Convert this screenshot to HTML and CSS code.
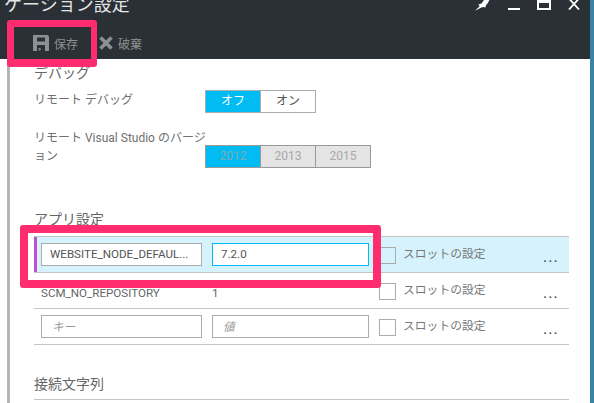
FILE: index.html
```html
<!DOCTYPE html>
<html lang="ja">
<head>
    <meta charset="UTF-8">
    <meta name="viewport" content="width=device-width, initial-scale=1.0">
    <title>アプリケーション設定</title>
    <link rel="stylesheet" href="styles.css">
</head>
<body>
    <div class="blade">
        <header class="blade-head">
            <div class="title-row">
                <h1 class="title">ケーション設定</h1>
                <div class="window-btns">
                    <svg class="win-pin" width="15" height="11" viewBox="0 0 15 11"><path d="M0 10.8 L4.6 6.2 L3.4 4.6 L6.4 3.4 L9 0 L14.4 0 L12.6 3.4 L11 5 L10.4 7.6 L8.4 7 L6.4 7.4 Z" fill="#fff"/></svg>
                    <svg class="win-min" width="12" height="10" viewBox="0 0 12 10"><rect y="8" width="12" height="2" fill="#fff"/></svg>
                    <svg class="win-max" width="14" height="10" viewBox="0 0 14 10"><path d="M1 -2 H13 V9 H1 Z" fill="none" stroke="#fff" stroke-width="2"/><rect y="0" width="14" height="3" fill="#fff"/></svg>
                    <svg class="win-close" width="12" height="10" viewBox="0 0 12 10"><path d="M1 -1.5 L11 9.5 M11 -1.5 L1 9.5" stroke="#fff" stroke-width="1.8" fill="none"/></svg>
                </div>
            </div>
            <div class="commands">
                <div class="command">
                    <svg width="16" height="16" viewBox="0 0 16 16"><path fill-rule="evenodd" d="M0 0 H14.5 L16 1.5 V16 H0 Z M4 2.5 V6.5 H12 V2.5 Z M4 10 V16 H12 V10 Z" fill="#8d9092"/><rect x="5.5" y="13.2" width="2.2" height="2.2" fill="#8d9092"/></svg>
                    <span>保存</span>
                </div>
                <div class="command">
                    <svg width="14" height="14" viewBox="0 0 14 14"><path d="M1.5 1.5 L12.5 12.5 M12.5 1.5 L1.5 12.5" stroke="#8d9092" stroke-width="3.6" fill="none"/></svg>
                    <span>破棄</span>
                </div>
            </div>
        </header>

        <main class="blade-body">
            <h2 class="section-title first">デバッグ</h2>
            <div class="field field-remote">
                <div class="field-label">リモート デバッグ</div>
                <div class="toggle">
                    <div class="seg on">オフ</div>
                    <div class="seg">オン</div>
                </div>
            </div>
            <div class="field field-version">
                <div class="field-label">リモート Visual Studio のバージ<br>ョン</div>
                <div class="toggle disabled">
                    <div class="seg on">2012</div>
                    <div class="seg">2013</div>
                    <div class="seg">2015</div>
                </div>
            </div>

            <h2 class="section-title apps">アプリ設定</h2>
            <div class="settings">
                <div class="row selected">
                    <div class="cell-input"><div class="input">WEBSITE_NODE_DEFAUL...</div></div>
                    <div class="cell-input"><div class="input focus">7.2.0</div></div>
                    <div class="check"></div>
                    <div class="slot">スロットの設定</div>
                    <div class="more">...</div>
                </div>
                <div class="row">
                    <div class="cell-input plain">SCM_NO_REPOSITORY</div>
                    <div class="cell-input plain">1</div>
                    <div class="check"></div>
                    <div class="slot">スロットの設定</div>
                    <div class="more">...</div>
                </div>
                <div class="row">
                    <div class="cell-input"><div class="input hint">キー</div></div>
                    <div class="cell-input"><div class="input hint">値</div></div>
                    <div class="check"></div>
                    <div class="slot">スロットの設定</div>
                    <div class="more">...</div>
                </div>
            </div>

            <h2 class="section-title conn">接続文字列</h2>
            <div class="conn-line"></div>
        </main>

        <div class="mark mark-save"></div>
        <div class="mark mark-row"></div>
    </div>
</body>
</html>
```

FILE: styles.css
```css
* {
    box-sizing: border-box;
}
html, body {
    margin: 0;
    height: 100%;
    overflow: hidden;
}
body {
    font-family: Roboto, "Noto Sans CJK JP", sans-serif;
    background-color: #fff;
    color: #707070;
    font-size: 12px;
}
.blade {
    position: relative;
    width: 594px;
    height: 403px;
    overflow: hidden;
    display: flex;
    flex-direction: column;
    border-right: 4px solid #3a82a6;
}
.blade-head {
    height: 59px;
    background-color: #2a3035;
    flex: none;
}
.title-row {
    height: 27px;
    display: flex;
    justify-content: space-between;
    align-items: flex-start;
}
.title {
    margin: -10px 0 0 4px;
    font-size: 18px;
    line-height: 26px;
    font-weight: 400;
    color: #e4e6e7;
    font-family: "Noto Sans CJK JP", sans-serif;
}
.window-btns {
    display: flex;
    margin-right: 10px;
}
.win-pin { margin-right: 18px; }
.win-min { margin-right: 17px; }
.win-max { margin-right: 17px; }
.commands {
    display: flex;
    padding: 8px 0 0 33px;
}
.command {
    display: flex;
    align-items: center;
    height: 16px;
    margin-right: 21px;
    color: #8d9092;
    font-family: "Noto Sans CJK JP", sans-serif;
}
.command span {
    margin-left: 5px;
}
.blade-body {
    flex: 1;
    margin-left: 7px;
    margin-right: 21px;
    border-left: 3px solid #b5b5b5;
    padding-left: 24px;
}
.section-title {
    margin: 0;
    font-size: 14px;
    line-height: 20px;
    font-weight: 400;
    color: #666;
    font-family: "Noto Sans CJK JP", sans-serif;
}
.section-title.first { margin-top: 3px; }
.section-title.apps { margin-top: 40px; }
.section-title.conn { margin-top: 28px; }
.field {
    display: flex;
    align-items: flex-start;
}
.field-remote { margin-top: 8px; }
.field-version { margin-top: 16px; }
.field-label {
    width: 171px;
    line-height: 18px;
    font-size: 12px;
    white-space: nowrap;
}
.field-remote .field-label { padding-top: 1px; }
.toggle {
    display: flex;
}
.field-version .toggle { margin-top: 16px; }
.seg {
    width: 56px;
    height: 23px;
    line-height: 21px;
    text-align: center;
    border: 1px solid #ababab;
    margin-left: -1px;
    color: #555;
    background-color: #fff;
    font-size: 12px;
}
.seg:first-child {
    margin-left: 0;
}
.seg.on {
    background-color: #00bcf2;
    color: #fff;
}
.toggle.disabled .seg {
    background-color: #e4e4e4;
    color: #a8a8a8;
    border-color: #999;
}
.toggle.disabled .seg.on {
    background-color: #00bcf2;
    color: #7fa9b8;
}
.settings {
    border-top: 1px solid #c4c4c4;
    margin-top: 8px;
}
.row {
    display: flex;
    height: 36px;
    border-bottom: 1px solid #c4c4c4;
    padding-left: 7px;
    align-items: flex-start;
}
.row.selected {
    background-color: #d6f3fd;
    box-shadow: inset 3px 0 0 #c04fd6;
}
.cell-input {
    width: 171px;
    flex: none;
    padding-top: 6px;
    padding-right: 10px;
}
.cell-input + .cell-input {
    width: 167px;
}
.input {
    height: 23px;
    line-height: 21px;
    border: 1px solid #ababab;
    background-color: #fff;
    padding-left: 8px;
    color: #555;
    font-size: 11.6px;
    white-space: nowrap;
}
.input.focus {
    border-color: #00bcf2;
}
.input.hint {
    color: #999;
    font-style: italic;
    padding-left: 10px;
    font-family: "Noto Sans CJK JP", sans-serif;
}
.plain {
    padding-top: 0;
    line-height: 40px;
    color: #666;
    font-size: 11.6px;
}
.check {
    width: 17px;
    height: 17px;
    margin-top: 10px;
    border: 1px solid #ababab;
    background-color: #fff;
    flex: none;
}
.row.selected .check {
    background-color: transparent;
}
.slot {
    width: 140px;
    margin-left: 7px;
    margin-top: 7px;
    line-height: 18px;
    font-size: 11.8px;
    flex: none;
    color: #777;
    font-family: "Noto Sans CJK JP", sans-serif;
}
.more {
    font-size: 16px;
    line-height: 20px;
    margin-top: 10px;
    color: #444;
    letter-spacing: 1px;
}
.conn-line {
    border-top: 1px solid #c4c4c4;
    margin-top: 6px;
}
.mark {
    position: absolute;
    border: 7px solid #ff2d6f;
    border-radius: 3px;
}
.mark-save {
    left: 7px;
    top: 20px;
    width: 90px;
    height: 47px;
    border-right-width: 6px;
    border-bottom-width: 8px;
}
.mark-row {
    left: 20px;
    top: 225px;
    width: 361px;
    height: 63px;
    border-width: 8px;
}
```
